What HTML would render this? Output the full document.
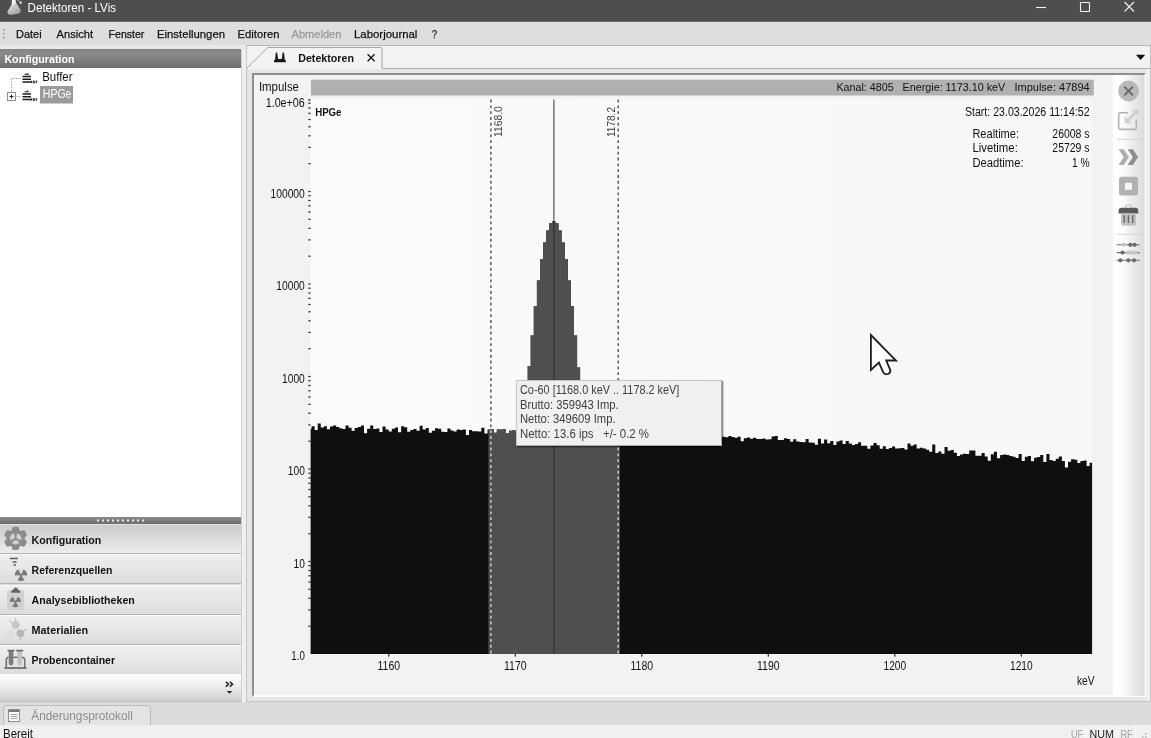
<!DOCTYPE html>
<html><head><meta charset="utf-8"><title>Detektoren - LVis</title>
<style>
html,body{margin:0;padding:0;}
html{filter:grayscale(1);}
body{width:1151px;height:738px;overflow:hidden;background:#dcdcdc;font-family:"Liberation Sans",sans-serif;font-size:12px;color:#111;position:relative;}
div{position:absolute;box-sizing:border-box;}
svg{position:absolute;left:0;top:0;}
text{white-space:pre;}
#title{left:0;top:0;width:1151px;height:22px;background:#4e4e4e;border-bottom:1px solid #6a6a6a;}
#menu{left:0;top:22px;width:1151px;height:23px;background:#dedede;}
#lhead{left:0;top:49px;width:241px;height:19px;background:linear-gradient(#848484 0%,#8a8a8a 30%,#6c6c6c 100%);}
#tree{left:0;top:68px;width:241px;height:449px;background:#fff;}
#gap{left:241px;top:49px;width:5px;height:653px;background:#efefef;border-left:1px solid #d2d2d2;}
#split{left:0;top:517px;width:241px;height:7px;background:linear-gradient(#8a8a8a,#6c6c6c);}
.nb{left:0;width:241px;height:30px;background:linear-gradient(#eeeeee 0%,#e7e7e7 50%,#dcdcdc 100%);border-top:1px solid #fafafa;border-bottom:1px solid #b4b4b4;}
.nb.sel{background:linear-gradient(#cbcbcb 0%,#dadada 45%,#ececec 100%);border-top:1px solid #e4e4e4;}
#ovf{left:0;top:674px;width:241px;height:28px;background:linear-gradient(#ffffff 0%,#f2f2f2 35%,#cfcfcf 100%);border-bottom:1px solid #bdbdbd;}
#btab{left:3px;top:705px;width:148px;height:21px;background:#e4e4e4;border:1px solid #bcbcbc;border-bottom:none;border-radius:4px 4px 0 0;}
#status{left:0;top:725px;width:1151px;height:13px;background:#f0f0f0;}
#tabstrip{left:246px;top:45px;width:905px;height:24px;background:#f2f2f2;border-top:1px solid #b6b6b6;border-left:1px solid #c8c8c8;border-right:1px solid #c0c0c0;}
#docframe{left:246px;top:68px;width:905px;height:634px;background:#e5e5e5;border-top:1px solid #adadad;border-left:1px solid #c4c4c4;border-right:1px solid #c0c0c0;border-bottom:1px solid #c4c4c4;}
#rstrip{left:1146px;top:69px;width:4px;height:632px;background:#f0f0f0;}
#inner{left:252px;top:73px;width:894px;height:624px;background:#f2f2f2;border:2px solid #8e8e8e;border-right:2px solid #fbfbfb;border-bottom:2px solid #fbfbfb;}
#tip{left:516px;top:380px;width:206px;height:66px;background:#f0f0f0;border:1px solid #c6c6c6;border-right-color:#a8a8a8;border-bottom-color:#a8a8a8;box-shadow:1px 1px 1.5px rgba(0,0,0,.6);}
</style></head><body>
<div id="title"></div><div id="menu"></div><div id="lhead"></div><div id="tree"></div><div id="gap"></div><div id="split"></div>
<div class="nb sel" style="top:524px"></div>
<div class="nb" style="top:554px"></div>
<div class="nb" style="top:584.5px"></div>
<div class="nb" style="top:614.5px"></div>
<div class="nb" style="top:644.5px"></div>
<div id="ovf"></div><div id="btab"></div><div id="status"></div><div id="tabstrip"></div><div id="docframe"></div><div id="rstrip"></div><div id="inner"></div>
<svg id="main" width="1151" height="738" viewBox="0 0 1151 738" style="font-family:'Liberation Sans',sans-serif">
<linearGradient id="fl" x1="0" y1="0" x2="0.600" y2="1"><stop offset="0" stop-color="#f2f2f2"/><stop offset="0.450" stop-color="#d0d0d0"/><stop offset="1" stop-color="#a4a4a4"/></linearGradient><g><path d="M11.900 0h3.600l.300 2.600 4 5.600c1.500 2.400 1.200 4.300-.800 5.200l-7.300 1.300c-3.400.400-5-1.300-4-3.600l4-6.900z" fill="url(#fl)"/><path d="M12 0h3.300l.300 2.800-3.300 2.600z" fill="#f6f6f6"/><circle cx="20.600" cy="2.600" r="1.300" fill="#dadada"/><circle cx="18.300" cy="0.400" r="0.700" fill="#bdbdbd"/></g><text x="27.6" y="11.5" font-size="12.5" fill="#fff" textLength="88.4" lengthAdjust="spacingAndGlyphs">Detektoren - LVis</text>
<g stroke="#f4f4f4" stroke-width="1.100" fill="none"><path d="M1036 7.500h10"/><rect x="1080.500" y="2.500" width="9" height="9" rx="0.500"/><path d="M1124.500 2l9.500 9.500M1134 2l-9.500 9.500"/></g><g fill="#9c9c9c"><rect x="3" y="29" width="2" height="2"/><rect x="3" y="33" width="2" height="2"/><rect x="3" y="37" width="2" height="2"/></g><g fill="#fff"><rect x="4" y="30" width="1" height="1"/><rect x="4" y="34" width="1" height="1"/><rect x="4" y="38" width="1" height="1"/></g><text x="16" y="37.6" font-size="11.5" fill="#111" textLength="25.6" lengthAdjust="spacingAndGlyphs" stroke="#111" stroke-width="0.250">Datei</text>
<text x="56.6" y="37.6" font-size="11.5" fill="#111" textLength="36.4" lengthAdjust="spacingAndGlyphs" stroke="#111" stroke-width="0.250">Ansicht</text>
<text x="108.6" y="37.6" font-size="11.5" fill="#111" textLength="35.8" lengthAdjust="spacingAndGlyphs" stroke="#111" stroke-width="0.250">Fenster</text>
<text x="157" y="37.6" font-size="11.5" fill="#111" textLength="68" lengthAdjust="spacingAndGlyphs" stroke="#111" stroke-width="0.250">Einstellungen</text>
<text x="237.6" y="37.6" font-size="11.5" fill="#111" textLength="41.8" lengthAdjust="spacingAndGlyphs" stroke="#111" stroke-width="0.250">Editoren</text>
<text x="291.6" y="37.6" font-size="11.5" fill="#999" textLength="49.8" lengthAdjust="spacingAndGlyphs" stroke="#999" stroke-width="0.250">Abmelden</text>
<text x="354" y="37.6" font-size="11.5" fill="#111" textLength="63.4" lengthAdjust="spacingAndGlyphs" stroke="#111" stroke-width="0.250">Laborjournal</text>
<text x="432" y="37.6" font-size="11.5" fill="#111" textLength="5" lengthAdjust="spacingAndGlyphs" stroke="#111" stroke-width="0.250">?</text>
<rect x="0" y="45" width="246" height="4" fill="#e9e9e9"/><text x="4.4" y="62.6" font-size="11" font-weight="bold" fill="#fff" textLength="70.2" lengthAdjust="spacingAndGlyphs">Konfiguration</text>
<g stroke="#a0a0a0" stroke-width="1" stroke-dasharray="1 1" fill="none"><path d="M11.500 79v13M12 78.500h10M15.500 96.500h6"/></g><rect x="7.500" y="92.500" width="8" height="8" fill="#fff" stroke="#909090"/><path d="M9.500 96.500h4M11.500 94.500v4" stroke="#222" stroke-width="1"/><g id="det"><path d="M22.500 76.400h8.500M22.500 79.200h8.500M22.500 82h8.500" stroke="#1c1c1c" stroke-width="1.500" fill="none"/><path d="M24.500 74.300h4.500M27.500 73l-1.500 1.500" stroke="#333" stroke-width="1" fill="none"/><path d="M31.800 80.600l-.500 2.600M33.600 80.600l-.400 1.800q.700 1.200 1.500 0l.400-1.800M36.800 80.600l-.500 2.600" stroke="#3a3a3a" stroke-width="1.100" fill="none"/></g><use href="#det" y="17.500"/><rect x="40" y="86" width="33" height="17.500" fill="#9a9a9a"/><text x="42.2" y="80.9" font-size="12" fill="#111" textLength="30.3" lengthAdjust="spacingAndGlyphs">Buffer</text>
<text x="42.8" y="98.1" font-size="12" fill="#fff" textLength="28.6" lengthAdjust="spacingAndGlyphs">HPGe</text>
<g fill="#ececec"><rect x="97" y="519.500" width="2" height="2"/><rect x="102" y="519.500" width="2" height="2"/><rect x="107" y="519.500" width="2" height="2"/><rect x="112" y="519.500" width="2" height="2"/><rect x="117" y="519.500" width="2" height="2"/><rect x="122" y="519.500" width="2" height="2"/><rect x="127" y="519.500" width="2" height="2"/><rect x="132" y="519.500" width="2" height="2"/><rect x="137" y="519.500" width="2" height="2"/><rect x="142" y="519.500" width="2" height="2"/></g><text x="31.6" y="544" font-size="11" font-weight="bold" fill="#111" textLength="69.7" lengthAdjust="spacingAndGlyphs">Konfiguration</text>
<text x="31.6" y="574" font-size="11" font-weight="bold" fill="#111" textLength="80.9" lengthAdjust="spacingAndGlyphs">Referenzquellen</text>
<text x="31.6" y="604" font-size="11" font-weight="bold" fill="#111" textLength="103.2" lengthAdjust="spacingAndGlyphs">Analysebibliotheken</text>
<text x="31.6" y="634" font-size="11" font-weight="bold" fill="#111" textLength="56.4" lengthAdjust="spacingAndGlyphs">Materialien</text>
<text x="31.6" y="664.2" font-size="11" font-weight="bold" fill="#111" textLength="83.4" lengthAdjust="spacingAndGlyphs">Probencontainer</text>
<g fill="#8c8c8c"><rect x="12.0" y="526.6999999999999" width="7.200" height="7" rx="2.200" transform="rotate(0 15.6 538.4)"/><rect x="12.0" y="526.6999999999999" width="7.200" height="7" rx="2.200" transform="rotate(60 15.6 538.4)"/><rect x="12.0" y="526.6999999999999" width="7.200" height="7" rx="2.200" transform="rotate(120 15.6 538.4)"/><rect x="12.0" y="526.6999999999999" width="7.200" height="7" rx="2.200" transform="rotate(180 15.6 538.4)"/><rect x="12.0" y="526.6999999999999" width="7.200" height="7" rx="2.200" transform="rotate(240 15.6 538.4)"/><rect x="12.0" y="526.6999999999999" width="7.200" height="7" rx="2.200" transform="rotate(300 15.6 538.4)"/><circle cx="15.6" cy="538.4" r="9.200"/></g><g fill="#d0d0d0"><path d="M15.60 538.70L19.48 543.01A5.8 5.8 0 0 1 11.72 543.01Z"/><path d="M15.60 538.70L9.93 539.91A5.8 5.8 0 0 1 13.81 533.18Z"/><path d="M15.60 538.70L17.39 533.18A5.8 5.8 0 0 1 21.27 539.91Z"/></g><circle cx="15.6" cy="538.6999999999999" r="1.7" fill="#8c8c8c"/><g stroke="#5c5c5c" stroke-width="1.500"><path d="M9.900 558.400h8M12.600 561.900h4M13.600 565.100h2.400"/></g><circle cx="21" cy="575" r="6.300" fill="#dcdcdc"/><g fill="#787878"><path d="M21.00 575.00L24.41 580.06A6.1 6.1 0 0 1 17.59 580.06Z"/><path d="M21.00 575.00L14.91 575.43A6.1 6.1 0 0 1 18.33 569.52Z"/><path d="M21.00 575.00L23.67 569.52A6.1 6.1 0 0 1 27.09 575.43Z"/></g><circle cx="21" cy="575" r="1.3" fill="#787878"/><rect x="7" y="590.200" width="17.200" height="20" rx="1.500" fill="#d2d2d2"/><path d="M11.200 592.700v-1.200q0-1.500 2-1.700q.400-2.300 2.450-2.300t2.450 2.300q2 .200 2 1.700v1.200z" fill="#666"/><g fill="#7a7a7a"><path d="M15.40 601.70L18.48 606.26A5.5 5.5 0 0 1 12.32 606.26Z"/><path d="M15.40 601.70L9.91 602.08A5.5 5.5 0 0 1 12.99 596.76Z"/><path d="M15.40 601.70L17.81 596.76A5.5 5.5 0 0 1 20.89 602.08Z"/></g><circle cx="15.4" cy="601.7" r="1.2" fill="#7a7a7a"/><g stroke-width="1.300" fill="none"><path d="M15.600 617.800v4M9.500 620.800l3.500 2.500" stroke="#c8c8c8"/><path d="M23.500 631.300l3-2M20.400 636.500v3.600" stroke="#bcbcbc"/><path d="M7.500 636l-3 2.300M10.400 637v3" stroke="#dcdcdc"/></g><circle cx="15.600" cy="624.800" r="3.900" fill="#c6c6c6"/><circle cx="20.400" cy="633.300" r="3.900" fill="#b6b6b6"/><circle cx="10.400" cy="633.700" r="3.900" fill="#dedede"/><path d="M8.700 651h4.700v12q0 2.400-2.350 2.400t-2.350-2.400z" fill="#7c7c7c"/><path d="M17.300 651h4.700v12q0 2.400-2.350 2.400t-2.350-2.400z" fill="#c2c2c2"/><g fill="none" stroke="#6e6e6e" stroke-width="1.500"><path d="M7.600 650.700h7M16.200 650.700h7" stroke-width="1.700"/><path d="M13.400 657.300h4"/><path d="M6.300 667.500v-7.500q0-2.500 2.400-2.700M24.700 667.500v-7.500q0-2.500-2.600-2.700"/><path d="M4.300 668h22.300" stroke-width="1.800"/></g><path d="M225.800 681.700l2.700 2.500-2.700 2.500M229.800 681.700l2.700 2.500-2.700 2.500" stroke="#1a1a1a" stroke-width="1.500" fill="none"/><path d="M226.800 691h5.400l-2.700 2.800z" fill="#222"/><rect x="8.500" y="709.500" width="11" height="12" fill="#fbfbfb" stroke="#8f8f8f"/><path d="M9 711h10" stroke="#777" stroke-width="2"/><path d="M10.500 714.500h7M10.500 716.500h7M10.500 718.500h7" stroke="#a8a8a8"/><text x="31.3" y="719.6" font-size="12" fill="#8c8c8c" textLength="101.5" lengthAdjust="spacingAndGlyphs">Änderungsprotokoll</text>
<text x="3" y="737.6" font-size="12" fill="#111" textLength="30" lengthAdjust="spacingAndGlyphs">Bereit</text>
<text x="1071" y="737.5" font-size="11" fill="#a0a0a0" textLength="12" lengthAdjust="spacingAndGlyphs">UF</text>
<text x="1089.6" y="737.5" font-size="11" fill="#222" textLength="24.4" lengthAdjust="spacingAndGlyphs">NUM</text>
<text x="1120.4" y="737.5" font-size="11" fill="#a0a0a0" textLength="12.4" lengthAdjust="spacingAndGlyphs">RF</text>
<g stroke="#fdfdfd"><path d="M1086 727v11M1116.700 727v11M1135.700 727v11"/></g><g fill="#b4b4b4"><rect x="1145" y="733" width="1.500" height="1.500"/><rect x="1142" y="736" width="1.500" height="1.500"/><rect x="1145" y="736" width="1.500" height="1.500"/></g><path d="M246.500 68.500L267.800 47.500H380q2 0 2 2V68.500" fill="#f3f3f3" stroke="#a4a4a4"/><path d="M247.500 68.500H381.500" stroke="#f3f3f3" stroke-width="1.400"/><path d="M274 62.300v-2.300h1l.800-7.400h1.300l1 6.400h3.600l1-6.400h1.300l.800 7.400h1v2.300z" fill="#1a1a1a"/><text x="298.2" y="61.6" font-size="11" font-weight="bold" fill="#111" textLength="55.8" lengthAdjust="spacingAndGlyphs">Detektoren</text>
<path d="M367.600 54.300l7 7M374.600 54.300l-7 7" stroke="#111" stroke-width="1.300"/><path d="M1136 54.800h9.200l-4.600 5.300z" fill="#0d0d0d"/><rect x="311" y="79.700" width="782.800" height="15.800" fill="#b0b0b0"/><text x="258.9" y="90.8" font-size="12" fill="#111" textLength="40.1" lengthAdjust="spacingAndGlyphs">Impulse</text>
<text x="836.4" y="91.1" font-size="11.5" fill="#111" textLength="57.2" lengthAdjust="spacingAndGlyphs">Kanal: 4805</text>
<text x="902.6" y="91.1" font-size="11.5" fill="#111" textLength="102.6" lengthAdjust="spacingAndGlyphs">Energie: 1173.10 keV</text>
<text x="1014.5" y="91.1" font-size="11.5" fill="#111" textLength="75.1" lengthAdjust="spacingAndGlyphs">Impulse: 47894</text>
<linearGradient id="pg" x1="0" x2="1"><stop offset="0" stop-color="#fbfbfb"/><stop offset="1" stop-color="#f7f7f7"/></linearGradient><rect x="310.600" y="99" width="781.500" height="555" fill="url(#pg)"/><path d="M310.6 654V429.0H311.5V426.3H314.6V430.1H317.7V423.4H320.8V427.6H323.9V426.3H326.9V429.3H330.0V426.4H333.1V425.6H336.2V427.1H339.3V428.2H342.4V428.9H345.5V425.5H348.6V427.7H351.6V430.7H354.7V428.1H357.8V427.0H360.9V425.4H364.0V433.2H367.1V428.8H370.2V425.5H373.3V429.0H376.3V428.4H379.4V432.1H382.5V426.5H385.6V429.4H388.7V431.4H391.8V428.7H394.9V427.4H398.0V432.2H401.1V426.3H404.1V427.2H407.2V431.7H410.3V430.1H413.4V429.1H416.5V430.7H419.6V425.8H422.7V429.6H425.8V428.0H428.8V432.8H431.9V430.8H435.0V428.3H438.1V428.8H441.2V431.8H444.3V431.9H447.4V428.5H450.5V430.6H453.5V431.4H456.6V429.4H459.7V430.1H462.8V429.6H465.9V435.1H469.0V430.0H472.1V431.3H475.2V431.2H478.2V431.5H481.3V427.8H484.4V433.5H487.5V429.5H490.6V428.9H493.7V432.8H496.8V429.6H499.9V429.4H503.0V429.2H506.0V433.0H509.1V430.7H512.2V430.0H515.3V430.9H518.4V426.5H521.5V416.4H524.6V395.2H527.7V366.1H530.7V335.4H533.8V305.9H536.9V280.4H540.0V259.0H543.1V242.4H546.2V230.4H549.3V223.3H552.4V220.9H555.4V223.3H558.5V230.4H561.6V242.4H564.7V259.1H567.8V280.4H570.9V306.0H574.0V335.5H577.1V367.4H580.1V396.7H583.2V417.7H586.3V429.6H589.4V435.6H592.5V434.9H595.6V434.8H598.7V434.8H601.8V437.0H604.8V438.5H607.9V429.1H611.0V437.6H614.1V436.8H617.2V434.9H620.3V436.5H623.4V433.6H626.5V435.7H629.6V429.8H632.6V437.5H635.7V435.4H638.8V439.6H641.9V436.0H645.0V434.9H648.1V440.2H651.2V436.3H654.3V432.3H657.3V434.2H660.4V438.0H663.5V438.9H666.6V436.1H669.7V433.0H672.8V434.9H675.9V437.9H679.0V434.7H682.0V434.9H685.1V436.3H688.2V438.2H691.3V438.2H694.4V436.2H697.5V438.3H700.6V436.7H703.7V435.9H706.7V433.6H709.8V432.8H712.9V436.5H716.0V437.1H719.1V438.0H722.2V436.7H725.3V437.2H728.4V436.1H731.5V436.9H734.5V437.7H737.6V436.8H740.7V441.3H743.8V438.3H746.9V437.5H750.0V438.8H753.1V437.7H756.2V438.9H759.2V439.1H762.3V438.4H765.4V439.6H768.5V439.3H771.6V436.5H774.7V436.1H777.8V439.9H780.9V440.0H783.9V438.2H787.0V438.9H790.1V441.7H793.2V439.2H796.3V441.6H799.4V442.0H802.5V442.3H805.6V439.1H808.6V442.5H811.7V442.7H814.8V444.7H817.9V438.8H821.0V443.5H824.1V439.6H827.2V443.3H830.3V440.9H833.4V445.1H836.4V441.6H839.5V440.4H842.6V444.1H845.7V440.9H848.8V443.6H851.9V444.9H855.0V444.0H858.1V442.3H861.1V445.7H864.2V445.8H867.3V448.8H870.4V445.4H873.5V443.1H876.6V445.2H879.7V448.7H882.8V446.2H885.8V448.9H888.9V447.9H892.0V446.4H895.1V448.4H898.2V448.3H901.3V448.0H904.4V449.6H907.5V443.4H910.5V445.8H913.6V444.5H916.7V448.6H919.8V447.8H922.9V448.5H926.0V449.8H929.1V451.7H932.2V444.4H935.3V452.9H938.3V451.5H941.4V453.7H944.5V447.0H947.6V450.7H950.7V450.1H953.8V452.7H956.9V455.9H960.0V454.5H963.0V453.8H966.1V454.1H969.2V450.6H972.3V450.5H975.4V455.7H978.5V455.8H981.6V452.9H984.7V456.4H987.7V460.8H990.8V454.3H993.9V451.7H997.0V458.2H1000.1V454.9H1003.2V454.6H1006.3V455.0H1009.4V456.1H1012.4V456.8H1015.5V457.9H1018.6V454.1H1021.7V461.1H1024.8V456.8H1027.9V456.0H1031.0V461.3H1034.1V457.8H1037.2V457.0H1040.2V454.9H1043.3V462.0H1046.4V454.0H1049.5V459.9H1052.6V461.1H1055.7V458.7H1058.8V456.4H1061.9V461.0H1064.9V467.6H1068.0V461.8H1071.1V459.2H1074.2V459.7H1077.3V463.0H1080.4V460.9H1083.5V460.5H1086.6V465.9H1089.6V462.7H1092.1V654Z" fill="#0f0f0f"/><clipPath id="roi"><rect x="488.400" y="99" width="131.400" height="556"/></clipPath><path clip-path="url(#roi)" d="M310.6 654V429.0H311.5V426.3H314.6V430.1H317.7V423.4H320.8V427.6H323.9V426.3H326.9V429.3H330.0V426.4H333.1V425.6H336.2V427.1H339.3V428.2H342.4V428.9H345.5V425.5H348.6V427.7H351.6V430.7H354.7V428.1H357.8V427.0H360.9V425.4H364.0V433.2H367.1V428.8H370.2V425.5H373.3V429.0H376.3V428.4H379.4V432.1H382.5V426.5H385.6V429.4H388.7V431.4H391.8V428.7H394.9V427.4H398.0V432.2H401.1V426.3H404.1V427.2H407.2V431.7H410.3V430.1H413.4V429.1H416.5V430.7H419.6V425.8H422.7V429.6H425.8V428.0H428.8V432.8H431.9V430.8H435.0V428.3H438.1V428.8H441.2V431.8H444.3V431.9H447.4V428.5H450.5V430.6H453.5V431.4H456.6V429.4H459.7V430.1H462.8V429.6H465.9V435.1H469.0V430.0H472.1V431.3H475.2V431.2H478.2V431.5H481.3V427.8H484.4V433.5H487.5V429.5H490.6V428.9H493.7V432.8H496.8V429.6H499.9V429.4H503.0V429.2H506.0V433.0H509.1V430.7H512.2V430.0H515.3V430.9H518.4V426.5H521.5V416.4H524.6V395.2H527.7V366.1H530.7V335.4H533.8V305.9H536.9V280.4H540.0V259.0H543.1V242.4H546.2V230.4H549.3V223.3H552.4V220.9H555.4V223.3H558.5V230.4H561.6V242.4H564.7V259.1H567.8V280.4H570.9V306.0H574.0V335.5H577.1V367.4H580.1V396.7H583.2V417.7H586.3V429.6H589.4V435.6H592.5V434.9H595.6V434.8H598.7V434.8H601.8V437.0H604.8V438.5H607.9V429.1H611.0V437.6H614.1V436.8H617.2V434.9H620.3V436.5H623.4V433.6H626.5V435.7H629.6V429.8H632.6V437.5H635.7V435.4H638.8V439.6H641.9V436.0H645.0V434.9H648.1V440.2H651.2V436.3H654.3V432.3H657.3V434.2H660.4V438.0H663.5V438.9H666.6V436.1H669.7V433.0H672.8V434.9H675.9V437.9H679.0V434.7H682.0V434.9H685.1V436.3H688.2V438.2H691.3V438.2H694.4V436.2H697.5V438.3H700.6V436.7H703.7V435.9H706.7V433.6H709.8V432.8H712.9V436.5H716.0V437.1H719.1V438.0H722.2V436.7H725.3V437.2H728.4V436.1H731.5V436.9H734.5V437.7H737.6V436.8H740.7V441.3H743.8V438.3H746.9V437.5H750.0V438.8H753.1V437.7H756.2V438.9H759.2V439.1H762.3V438.4H765.4V439.6H768.5V439.3H771.6V436.5H774.7V436.1H777.8V439.9H780.9V440.0H783.9V438.2H787.0V438.9H790.1V441.7H793.2V439.2H796.3V441.6H799.4V442.0H802.5V442.3H805.6V439.1H808.6V442.5H811.7V442.7H814.8V444.7H817.9V438.8H821.0V443.5H824.1V439.6H827.2V443.3H830.3V440.9H833.4V445.1H836.4V441.6H839.5V440.4H842.6V444.1H845.7V440.9H848.8V443.6H851.9V444.9H855.0V444.0H858.1V442.3H861.1V445.7H864.2V445.8H867.3V448.8H870.4V445.4H873.5V443.1H876.6V445.2H879.7V448.7H882.8V446.2H885.8V448.9H888.9V447.9H892.0V446.4H895.1V448.4H898.2V448.3H901.3V448.0H904.4V449.6H907.5V443.4H910.5V445.8H913.6V444.5H916.7V448.6H919.8V447.8H922.9V448.5H926.0V449.8H929.1V451.7H932.2V444.4H935.3V452.9H938.3V451.5H941.4V453.7H944.5V447.0H947.6V450.7H950.7V450.1H953.8V452.7H956.9V455.9H960.0V454.5H963.0V453.8H966.1V454.1H969.2V450.6H972.3V450.5H975.4V455.7H978.5V455.8H981.6V452.9H984.7V456.4H987.7V460.8H990.8V454.3H993.9V451.7H997.0V458.2H1000.1V454.9H1003.2V454.6H1006.3V455.0H1009.4V456.1H1012.4V456.8H1015.5V457.9H1018.6V454.1H1021.7V461.1H1024.8V456.8H1027.9V456.0H1031.0V461.3H1034.1V457.8H1037.2V457.0H1040.2V454.9H1043.3V462.0H1046.4V454.0H1049.5V459.9H1052.6V461.1H1055.7V458.7H1058.8V456.4H1061.9V461.0H1064.9V467.6H1068.0V461.8H1071.1V459.2H1074.2V459.7H1077.3V463.0H1080.4V460.9H1083.5V460.5H1086.6V465.9H1089.6V462.7H1092.1V654Z" fill="#4f4f4f"/><path d="M553.900 99.500V221" stroke="#5e5e5e" stroke-width="1.300"/><path d="M553.900 221V654" stroke="#333" stroke-width="1.300"/><g stroke-dasharray="2.900 2.900" stroke-width="1.350" fill="none"><path d="M490.900 99.600V654M618.200 99.600V654" stroke="#4a4a4a"/></g><clipPath id="blk"><path d="M310.6 654V429.0H311.5V426.3H314.6V430.1H317.7V423.4H320.8V427.6H323.9V426.3H326.9V429.3H330.0V426.4H333.1V425.6H336.2V427.1H339.3V428.2H342.4V428.9H345.5V425.5H348.6V427.7H351.6V430.7H354.7V428.1H357.8V427.0H360.9V425.4H364.0V433.2H367.1V428.8H370.2V425.5H373.3V429.0H376.3V428.4H379.4V432.1H382.5V426.5H385.6V429.4H388.7V431.4H391.8V428.7H394.9V427.4H398.0V432.2H401.1V426.3H404.1V427.2H407.2V431.7H410.3V430.1H413.4V429.1H416.5V430.7H419.6V425.8H422.7V429.6H425.8V428.0H428.8V432.8H431.9V430.8H435.0V428.3H438.1V428.8H441.2V431.8H444.3V431.9H447.4V428.5H450.5V430.6H453.5V431.4H456.6V429.4H459.7V430.1H462.8V429.6H465.9V435.1H469.0V430.0H472.1V431.3H475.2V431.2H478.2V431.5H481.3V427.8H484.4V433.5H487.5V429.5H490.6V428.9H493.7V432.8H496.8V429.6H499.9V429.4H503.0V429.2H506.0V433.0H509.1V430.7H512.2V430.0H515.3V430.9H518.4V426.5H521.5V416.4H524.6V395.2H527.7V366.1H530.7V335.4H533.8V305.9H536.9V280.4H540.0V259.0H543.1V242.4H546.2V230.4H549.3V223.3H552.4V220.9H555.4V223.3H558.5V230.4H561.6V242.4H564.7V259.1H567.8V280.4H570.9V306.0H574.0V335.5H577.1V367.4H580.1V396.7H583.2V417.7H586.3V429.6H589.4V435.6H592.5V434.9H595.6V434.8H598.7V434.8H601.8V437.0H604.8V438.5H607.9V429.1H611.0V437.6H614.1V436.8H617.2V434.9H620.3V436.5H623.4V433.6H626.5V435.7H629.6V429.8H632.6V437.5H635.7V435.4H638.8V439.6H641.9V436.0H645.0V434.9H648.1V440.2H651.2V436.3H654.3V432.3H657.3V434.2H660.4V438.0H663.5V438.9H666.6V436.1H669.7V433.0H672.8V434.9H675.9V437.9H679.0V434.7H682.0V434.9H685.1V436.3H688.2V438.2H691.3V438.2H694.4V436.2H697.5V438.3H700.6V436.7H703.7V435.9H706.7V433.6H709.8V432.8H712.9V436.5H716.0V437.1H719.1V438.0H722.2V436.7H725.3V437.2H728.4V436.1H731.5V436.9H734.5V437.7H737.6V436.8H740.7V441.3H743.8V438.3H746.9V437.5H750.0V438.8H753.1V437.7H756.2V438.9H759.2V439.1H762.3V438.4H765.4V439.6H768.5V439.3H771.6V436.5H774.7V436.1H777.8V439.9H780.9V440.0H783.9V438.2H787.0V438.9H790.1V441.7H793.2V439.2H796.3V441.6H799.4V442.0H802.5V442.3H805.6V439.1H808.6V442.5H811.7V442.7H814.8V444.7H817.9V438.8H821.0V443.5H824.1V439.6H827.2V443.3H830.3V440.9H833.4V445.1H836.4V441.6H839.5V440.4H842.6V444.1H845.7V440.9H848.8V443.6H851.9V444.9H855.0V444.0H858.1V442.3H861.1V445.7H864.2V445.8H867.3V448.8H870.4V445.4H873.5V443.1H876.6V445.2H879.7V448.7H882.8V446.2H885.8V448.9H888.9V447.9H892.0V446.4H895.1V448.4H898.2V448.3H901.3V448.0H904.4V449.6H907.5V443.4H910.5V445.8H913.6V444.5H916.7V448.6H919.8V447.8H922.9V448.5H926.0V449.8H929.1V451.7H932.2V444.4H935.3V452.9H938.3V451.5H941.4V453.7H944.5V447.0H947.6V450.7H950.7V450.1H953.8V452.7H956.9V455.9H960.0V454.5H963.0V453.8H966.1V454.1H969.2V450.6H972.3V450.5H975.4V455.7H978.5V455.8H981.6V452.9H984.7V456.4H987.7V460.8H990.8V454.3H993.9V451.7H997.0V458.2H1000.1V454.9H1003.2V454.6H1006.3V455.0H1009.4V456.1H1012.4V456.8H1015.5V457.9H1018.6V454.1H1021.7V461.1H1024.8V456.8H1027.9V456.0H1031.0V461.3H1034.1V457.8H1037.2V457.0H1040.2V454.9H1043.3V462.0H1046.4V454.0H1049.5V459.9H1052.6V461.1H1055.7V458.7H1058.8V456.4H1061.9V461.0H1064.9V467.6H1068.0V461.8H1071.1V459.2H1074.2V459.7H1077.3V463.0H1080.4V460.9H1083.5V460.5H1086.6V465.9H1089.6V462.7H1092.1V654Z"/></clipPath><g clip-path="url(#blk)" stroke-dasharray="2.900 2.900" stroke-width="1.350" fill="none"><path d="M490.900 99.600V654M618.200 99.600V654" stroke="#dcdcdc"/></g><text transform="translate(502.300,137) rotate(-90)" font-size="11.500" fill="#3c3c3c" textLength="30.800" lengthAdjust="spacingAndGlyphs">1168.0</text><text transform="translate(615.300,137) rotate(-90)" font-size="11.500" fill="#3c3c3c" textLength="30" lengthAdjust="spacingAndGlyphs">1178.2</text><text x="315.2" y="116.3" font-size="11" font-weight="bold" fill="#111" textLength="26.3" lengthAdjust="spacingAndGlyphs">HPGe</text>
<text x="304.8" y="660.3" font-size="12" fill="#111" text-anchor="end" textLength="13.5" lengthAdjust="spacingAndGlyphs">1.0</text>
<text x="304.8" y="567.8" font-size="12" fill="#111" text-anchor="end" textLength="11.3" lengthAdjust="spacingAndGlyphs">10</text>
<text x="304.8" y="475.3" font-size="12" fill="#111" text-anchor="end" textLength="17" lengthAdjust="spacingAndGlyphs">100</text>
<text x="304.8" y="382.8" font-size="12" fill="#111" text-anchor="end" textLength="22.8" lengthAdjust="spacingAndGlyphs">1000</text>
<text x="304.8" y="290.3" font-size="12" fill="#111" text-anchor="end" textLength="28.5" lengthAdjust="spacingAndGlyphs">10000</text>
<text x="304.8" y="197.8" font-size="12" fill="#111" text-anchor="end" textLength="34.3" lengthAdjust="spacingAndGlyphs">100000</text>
<text x="304.8" y="106.5" font-size="12" fill="#111" text-anchor="end" textLength="39.1" lengthAdjust="spacingAndGlyphs">1.0e+06</text>
<g fill="#2a2a2a"><rect x="308.3" y="625.6" width="2.3" height="1.200"/><rect x="308.3" y="609.3" width="2.3" height="1.200"/><rect x="308.3" y="597.7" width="2.3" height="1.200"/><rect x="308.3" y="588.7" width="2.3" height="1.200"/><rect x="308.3" y="581.4" width="2.3" height="1.200"/><rect x="308.3" y="575.2" width="2.3" height="1.200"/><rect x="308.3" y="569.9" width="2.3" height="1.200"/><rect x="308.3" y="565.1" width="2.3" height="1.200"/><rect x="308.3" y="560.9" width="2.3" height="1.200"/><rect x="308.3" y="533.1" width="2.3" height="1.200"/><rect x="308.3" y="516.8" width="2.3" height="1.200"/><rect x="308.3" y="505.2" width="2.3" height="1.200"/><rect x="308.3" y="496.2" width="2.3" height="1.200"/><rect x="308.3" y="488.9" width="2.3" height="1.200"/><rect x="308.3" y="482.7" width="2.3" height="1.200"/><rect x="308.3" y="477.4" width="2.3" height="1.200"/><rect x="308.3" y="472.6" width="2.3" height="1.200"/><rect x="308.3" y="468.4" width="2.3" height="1.200"/><rect x="308.3" y="440.6" width="2.3" height="1.200"/><rect x="308.3" y="424.3" width="2.3" height="1.200"/><rect x="308.3" y="412.7" width="2.3" height="1.200"/><rect x="308.3" y="403.7" width="2.3" height="1.200"/><rect x="308.3" y="396.4" width="2.3" height="1.200"/><rect x="308.3" y="390.2" width="2.3" height="1.200"/><rect x="308.3" y="384.9" width="2.3" height="1.200"/><rect x="308.3" y="380.1" width="2.3" height="1.200"/><rect x="308.3" y="375.9" width="2.3" height="1.200"/><rect x="308.3" y="348.1" width="2.3" height="1.200"/><rect x="308.3" y="331.8" width="2.3" height="1.200"/><rect x="308.3" y="320.2" width="2.3" height="1.200"/><rect x="308.3" y="311.2" width="2.3" height="1.200"/><rect x="308.3" y="303.9" width="2.3" height="1.200"/><rect x="308.3" y="297.7" width="2.3" height="1.200"/><rect x="308.3" y="292.4" width="2.3" height="1.200"/><rect x="308.3" y="287.6" width="2.3" height="1.200"/><rect x="308.3" y="283.4" width="2.3" height="1.200"/><rect x="308.3" y="255.6" width="2.3" height="1.200"/><rect x="308.3" y="239.3" width="2.3" height="1.200"/><rect x="308.3" y="227.7" width="2.3" height="1.200"/><rect x="308.3" y="218.7" width="2.3" height="1.200"/><rect x="308.3" y="211.4" width="2.3" height="1.200"/><rect x="308.3" y="205.2" width="2.3" height="1.200"/><rect x="308.3" y="199.9" width="2.3" height="1.200"/><rect x="308.3" y="195.1" width="2.3" height="1.200"/><rect x="308.3" y="190.9" width="2.3" height="1.200"/><rect x="308.3" y="163.1" width="2.3" height="1.200"/><rect x="308.3" y="146.8" width="2.3" height="1.200"/><rect x="308.3" y="135.2" width="2.3" height="1.200"/><rect x="308.3" y="126.2" width="2.3" height="1.200"/><rect x="308.3" y="118.9" width="2.3" height="1.200"/><rect x="308.3" y="112.7" width="2.3" height="1.200"/><rect x="308.3" y="107.4" width="2.3" height="1.200"/><rect x="308.3" y="102.6" width="2.3" height="1.200"/><rect x="308" y="99.400" width="2.600" height="1.200"/></g><text x="388.8" y="670" font-size="12" fill="#111" text-anchor="middle" textLength="22.6" lengthAdjust="spacingAndGlyphs">1160</text>
<rect x="388.2" y="654" width="1.200" height="2.600" fill="#2a2a2a"/><text x="515.3" y="670" font-size="12" fill="#111" text-anchor="middle" textLength="22.6" lengthAdjust="spacingAndGlyphs">1170</text>
<rect x="514.7" y="654" width="1.200" height="2.600" fill="#2a2a2a"/><text x="641.8" y="670" font-size="12" fill="#111" text-anchor="middle" textLength="22.6" lengthAdjust="spacingAndGlyphs">1180</text>
<rect x="641.2" y="654" width="1.200" height="2.600" fill="#2a2a2a"/><text x="768.3" y="670" font-size="12" fill="#111" text-anchor="middle" textLength="22.6" lengthAdjust="spacingAndGlyphs">1190</text>
<rect x="767.7" y="654" width="1.200" height="2.600" fill="#2a2a2a"/><text x="894.8" y="670" font-size="12" fill="#111" text-anchor="middle" textLength="22.6" lengthAdjust="spacingAndGlyphs">1200</text>
<rect x="894.2" y="654" width="1.200" height="2.600" fill="#2a2a2a"/><text x="1021.3" y="670" font-size="12" fill="#111" text-anchor="middle" textLength="22.6" lengthAdjust="spacingAndGlyphs">1210</text>
<rect x="1020.7" y="654" width="1.200" height="2.600" fill="#2a2a2a"/><text x="1077" y="685.1" font-size="12" fill="#111" textLength="17.6" lengthAdjust="spacingAndGlyphs">keV</text>
<text x="964.9" y="116.3" font-size="12" fill="#111" textLength="124.7" lengthAdjust="spacingAndGlyphs">Start: 23.03.2026 11:14:52</text>
<text x="972.4" y="137.5" font-size="12" fill="#111" textLength="46.6" lengthAdjust="spacingAndGlyphs">Realtime:</text>
<text x="1052.3" y="137.5" font-size="12" fill="#111" textLength="37.3" lengthAdjust="spacingAndGlyphs">26008 s</text>
<text x="972.4" y="152.1" font-size="12" fill="#111" textLength="45.4" lengthAdjust="spacingAndGlyphs">Livetime:</text>
<text x="1052.3" y="152.1" font-size="12" fill="#111" textLength="37.3" lengthAdjust="spacingAndGlyphs">25729 s</text>
<text x="972.4" y="166.7" font-size="12" fill="#111" textLength="51.2" lengthAdjust="spacingAndGlyphs">Deadtime:</text>
<text x="1072" y="166.7" font-size="12" fill="#111" textLength="17.6" lengthAdjust="spacingAndGlyphs">1 %</text>
<linearGradient id="tbg" x1="0" x2="1"><stop offset="0" stop-color="#fbfbfb"/><stop offset="0.100" stop-color="#ffffff"/><stop offset="0.300" stop-color="#fdfdfd"/><stop offset="0.560" stop-color="#efefef"/><stop offset="1" stop-color="#dbdbdb"/></linearGradient><rect x="1112.600" y="75" width="32" height="621" fill="url(#tbg)"/><circle cx="1128.600" cy="91" r="10.400" fill="#b9b9b9"/><path d="M1124.300 86.700l8.600 8.600M1132.900 86.700l-8.600 8.600" stroke="#666" stroke-width="1.800"/><path d="M1128 112.800h-7.500q-1.800 0-1.800 1.800v13q0 1.800 1.800 1.800h14q1.800 0 1.800-1.800V119.500" fill="none" stroke="#b4b4b4" stroke-width="1.600"/><g fill="#d0d0d0"><path d="M1138.500 109.500v7l-2.400-2.400-6.800 6.800 2.400 2.400h-7v-7l2.400 2.400 6.800-6.800-2.400-2.400z"/></g><path d="M1117 139.300h26M1117 234.300h26" stroke="#d6d6d6" stroke-width="1"/><path d="M1118.500 149.200h5.200l5.200 7.900-5.200 7.900h-5.200l5.200-7.900z" fill="#adadad"/><path d="M1127.700 149.200h5.200l5.200 7.900-5.200 7.900h-5.200l5.200-7.900z" fill="#8e8e8e"/><rect x="1119" y="176.700" width="19" height="18.800" rx="2.200" fill="#b2b2b2"/><rect x="1125" y="182.800" width="7" height="7" fill="#f6f6f6"/><path d="M1125.500 207.500v-1.500q0-1 1-1h4q1 0 1 1v1.500" fill="none" stroke="#bdbdbd" stroke-width="1"/><path d="M1118.600 213.400v-2.700q0-3 3-3h13.700q3 0 3 3v2.700z" fill="#5a5a5a"/><path d="M1121 213.400h15v10.400q0 2-2 2h-11q-2 0-2-2z" fill="#c2c2c2"/><path d="M1124.200 215.200v7.800M1128.400 215.200v7.800M1132.700 215.200v7.800" stroke="#666" stroke-width="1.400"/><g stroke="#6e6e6e" stroke-width="1.100"><path d="M1116.700 244.800h23M1116.700 252.600h23M1116.700 260.300h23"/></g><g fill="#6a6a6a"><circle cx="1130.300" cy="244.800" r="2.100"/><circle cx="1134.500" cy="244.800" r="2.100"/><circle cx="1122.500" cy="252.600" r="2.100"/><circle cx="1120.400" cy="260.300" r="2.100"/><circle cx="1128.400" cy="260.300" r="2.100"/><circle cx="1134" cy="260.300" r="2.100"/></g><g fill="#c6c6c6"><circle cx="1123.500" cy="244.800" r="2.100"/><circle cx="1128.200" cy="252.600" r="2.200"/><circle cx="1131.800" cy="252.600" r="2.200"/><circle cx="1135.400" cy="252.600" r="2.200"/></g></svg>
<div id="tip"></div>
<svg id="top" width="1151" height="738" viewBox="0 0 1151 738" style="font-family:'Liberation Sans',sans-serif">
<text x="520" y="394" font-size="12" fill="#3e3e3e" textLength="159.4" lengthAdjust="spacingAndGlyphs">Co-60 [1168.0 keV .. 1178.2 keV]</text>
<text x="520" y="408.6" font-size="12" fill="#3e3e3e" textLength="98.6" lengthAdjust="spacingAndGlyphs">Brutto: 359943 Imp.</text>
<text x="520" y="423" font-size="12" fill="#3e3e3e" textLength="95.6" lengthAdjust="spacingAndGlyphs">Netto: 349609 Imp.</text>
<text x="520" y="437.6" font-size="12" fill="#3e3e3e" textLength="129" lengthAdjust="spacingAndGlyphs">Netto: 13.6 ips   +/- 0.2 %</text>
<path d="M870.900 335v35l8-7.400 4.400 9.800q1.500 2.800 4.600 1.600t2.300-4.200l-4-9.300h9.800z" fill="#fff" stroke="#1e1e1e" stroke-width="1.800" stroke-linejoin="miter"/></svg>
</body></html>
